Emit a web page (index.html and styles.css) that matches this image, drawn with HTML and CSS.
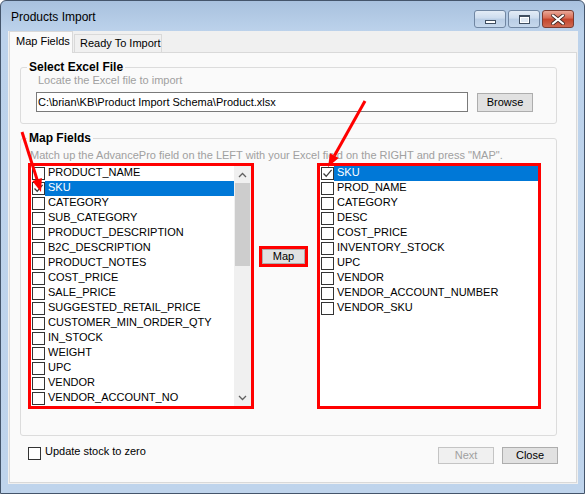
FILE: index.html
```html
<!DOCTYPE html>
<html>
<head>
<meta charset="utf-8">
<title>Products Import</title>
<link rel="stylesheet" href="styles.css">
</head>
<body>
<div class="window">
  <div class="titlebar">
    <span class="title">Products Import</span>
    <div class="caption-buttons">
      <div class="cbtn"><span class="min-glyph"></span></div>
      <div class="cbtn"><span class="max-glyph"></span></div>
      <div class="cbtn cbtn-close">
        <svg width="14" height="11" viewBox="0 0 14 11"><path d="M2 1.5 L12 9.5 M12 1.5 L2 9.5" stroke="#3b2420" stroke-width="3.6" stroke-linecap="round"/><path d="M2 1.5 L12 9.5 M12 1.5 L2 9.5" stroke="#ffffff" stroke-width="2.2" stroke-linecap="round"/></svg>
      </div>
    </div>
  </div>
  <div class="client">
    <div class="tabs">
      <div class="tab tab-active">Map Fields</div>
      <div class="tab tab-inactive">Ready To Import</div>
    </div>
    <div class="tabpage">
      <fieldset class="group group-file">
        <legend>Select Excel File</legend>
        <div class="hint hint-file">Locate the Excel file to import</div>
        <div class="file-row">
          <div class="textbox">C:\brian\KB\Product Import Schema\Product.xlsx</div>
          <div class="button browse">Browse</div>
        </div>
      </fieldset>
      <fieldset class="group group-map">
        <legend>Map Fields</legend>
        <div class="hint hint-map">Match up the AdvancePro field on the LEFT with your Excel field on the RIGHT and press "MAP".</div>
        <div class="map-row">
          <div class="listbox listbox-left">
            <div class="items">
              <div class="row"><span class="cb"></span><span class="label">PRODUCT_NAME</span></div>
              <div class="row row-selected"><span class="cb cb-checked"><svg width="11" height="11" viewBox="0 0 11 11"><path d="M1.5 5.5 L4.2 8.3 L9.6 1.8" fill="none" stroke="#3a3a3a" stroke-width="1.3"/></svg></span><span class="label">SKU</span></div>
              <div class="row"><span class="cb"></span><span class="label">CATEGORY</span></div>
              <div class="row"><span class="cb"></span><span class="label">SUB_CATEGORY</span></div>
              <div class="row"><span class="cb"></span><span class="label">PRODUCT_DESCRIPTION</span></div>
              <div class="row"><span class="cb"></span><span class="label">B2C_DESCRIPTION</span></div>
              <div class="row"><span class="cb"></span><span class="label">PRODUCT_NOTES</span></div>
              <div class="row"><span class="cb"></span><span class="label">COST_PRICE</span></div>
              <div class="row"><span class="cb"></span><span class="label">SALE_PRICE</span></div>
              <div class="row"><span class="cb"></span><span class="label">SUGGESTED_RETAIL_PRICE</span></div>
              <div class="row"><span class="cb"></span><span class="label">CUSTOMER_MIN_ORDER_QTY</span></div>
              <div class="row"><span class="cb"></span><span class="label">IN_STOCK</span></div>
              <div class="row"><span class="cb"></span><span class="label">WEIGHT</span></div>
              <div class="row"><span class="cb"></span><span class="label">UPC</span></div>
              <div class="row"><span class="cb"></span><span class="label">VENDOR</span></div>
              <div class="row"><span class="cb"></span><span class="label">VENDOR_ACCOUNT_NO</span></div>
            </div>
            <div class="scrollbar">
              <div class="sb-btn"><svg width="9" height="6" viewBox="0 0 9 6"><path d="M1 5 L4.5 1.5 L8 5" fill="none" stroke="#606060" stroke-width="1.3"/></svg></div>
              <div class="sb-thumb"></div>
              <div class="sb-track"></div>
              <div class="sb-btn"><svg width="9" height="6" viewBox="0 0 9 6"><path d="M1 1 L4.5 4.5 L8 1" fill="none" stroke="#606060" stroke-width="1.3"/></svg></div>
            </div>
          </div>
          <div class="map-wrap"><div class="button map-button">Map</div></div>
          <div class="listbox listbox-right">
            <div class="items">
              <div class="row row-selected"><span class="cb cb-checked"><svg width="11" height="11" viewBox="0 0 11 11"><path d="M1.5 5.5 L4.2 8.3 L9.6 1.8" fill="none" stroke="#3a3a3a" stroke-width="1.3"/></svg></span><span class="label">SKU</span></div>
              <div class="row"><span class="cb"></span><span class="label">PROD_NAME</span></div>
              <div class="row"><span class="cb"></span><span class="label">CATEGORY</span></div>
              <div class="row"><span class="cb"></span><span class="label">DESC</span></div>
              <div class="row"><span class="cb"></span><span class="label">COST_PRICE</span></div>
              <div class="row"><span class="cb"></span><span class="label">INVENTORY_STOCK</span></div>
              <div class="row"><span class="cb"></span><span class="label">UPC</span></div>
              <div class="row"><span class="cb"></span><span class="label">VENDOR</span></div>
              <div class="row"><span class="cb"></span><span class="label">VENDOR_ACCOUNT_NUMBER</span></div>
              <div class="row"><span class="cb"></span><span class="label">VENDOR_SKU</span></div>
            </div>
          </div>
        </div>
      </fieldset>
      <div class="footer">
        <div class="check"><span class="cb"></span><span class="check-text">Update stock to zero</span></div>
        <div class="footer-buttons">
          <div class="button button-disabled">Next</div>
          <div class="button">Close</div>
        </div>
      </div>
    </div>
  </div>
</div>
<svg class="annotations" width="585" height="494" viewBox="0 0 585 494">
  <line x1="22" y1="132" x2="37.1" y2="179.6" stroke="#ff0000" stroke-width="3"/>
  <polygon points="41,192 41.9,178.1 32.3,181.1" fill="#ff0000"/>
  <line x1="365" y1="101" x2="334.4" y2="155.7" stroke="#ff0000" stroke-width="3"/>
  <polygon points="328,167 338.7,158.1 330,153.2" fill="#ff0000"/>
</svg>
</body>
</html>
```
FILE: styles.css
```css
* { box-sizing: border-box; }

body {
  margin: 0;
  font-family: "Liberation Sans", Arial, sans-serif;
  font-size: 11px;
  color: #000;
  background: #ffffff;
}

.window {
  width: 585px;
  height: 494px;
  border: 1px solid #44556b;
  border-radius: 6px 6px 0 0;
  background: linear-gradient(#a8c1de, #bcd2eb 30px, #bfd4ec);
  display: flex;
  flex-direction: column;
}

.titlebar {
  height: 30px;
  flex: none;
  display: flex;
  align-items: flex-start;
  padding-left: 10px;
}

.title {
  font-size: 12px;
  line-height: 15px;
  margin-top: 9px;
  color: #000;
}

.caption-buttons {
  margin-left: auto;
  margin-top: 9px;
  margin-right: 10px;
  display: flex;
  gap: 2px;
}

.cbtn {
  width: 32px;
  height: 18px;
  border: 1px solid #7086a2;
  border-radius: 3px;
  display: flex;
  align-items: center;
  justify-content: center;
  background: linear-gradient(#e3ecf6, #cddcee 45%, #b9cde5 50%, #c6d8ec);
}

.cbtn-close {
  border-color: #7c3b30;
  background: linear-gradient(#e9a898, #d86a52 45%, #c4442b 50%, #cf6a52);
}

.min-glyph {
  width: 11px;
  height: 4px;
  margin-top: 5px;
  border: 1px solid #3f4e60;
  background: #fff;
}

.max-glyph {
  width: 11px;
  height: 9px;
  border: 1px solid #3f4e60;
  border-top-width: 2px;
  background: #dfe8f2;
  box-shadow: inset 0 0 0 1px #fff;
}

.client {
  flex: 1;
  margin: 0 6px 9px 7px;
  background: #f0f0f0;
  display: flex;
  flex-direction: column;
}

.tabs {
  display: flex;
  align-items: flex-end;
  height: 21px;
  padding-left: 1px;
  position: relative;
  z-index: 1;
}

.tab {
  border: 1px solid #d9d9d9;
  border-bottom: none;
  line-height: 13px;
  white-space: nowrap;
}

.tab-active {
  width: 64px;
  height: 22px;
  margin-bottom: -1px;
  padding: 3px 0 0 6px;
  background: #fafafa;
}

.tab-inactive {
  width: 88px;
  height: 18px;
  margin-left: 1px;
  padding: 2px 0 0 5px;
  background: #f0f0f0;
}

.tabpage {
  flex: 1;
  margin: 0 1px 1px 1px;
  border: 1px solid #d9d9d9;
  background: #fafafa;
  display: flex;
  flex-direction: column;
}

.group {
  margin: 7px 19px 0 10px;
  padding: 0;
  border: 1px solid #dcdcdc;
  border-radius: 3px;
  min-width: 0;
}

.group legend {
  margin-left: 6px;
  padding: 0 2px;
  font-weight: bold;
  font-size: 12px;
  line-height: 14px;
}

.hint {
  color: #a0a0a0;
  line-height: 13px;
  white-space: nowrap;
}

.hint-file { margin-left: 17px; }

.hint-map {
  margin: 4px 0 1px 9px;
}

.file-row {
  display: flex;
  align-items: center;
  margin: 5px 0 11px 15px;
}

.textbox {
  width: 432px;
  height: 20px;
  border: 1px solid #7a7a7a;
  background: #fff;
  padding-left: 1px;
  line-height: 18px;
  white-space: nowrap;
}

.button {
  border: 1px solid #adadad;
  background: #e1e1e1;
  text-align: center;
}

.browse {
  width: 56px;
  height: 19px;
  margin-left: 9px;
  line-height: 17px;
}

.map-row {
  display: flex;
  align-items: flex-start;
  margin: 0 0 26px 7px;
}

.listbox {
  height: 246px;
  border: 3px solid #ff0000;
  background: #fff;
  display: flex;
}

.listbox-left { width: 226px; }

.listbox-right {
  width: 224px;
  margin-left: 9px;
}

.items {
  flex: 1;
  min-width: 0;
}

.row {
  display: flex;
  align-items: flex-start;
  height: 15px;
}

.cb {
  flex: none;
  width: 13px;
  height: 13px;
  border: 1px solid #333;
  background: #fff;
  margin: 1px 0 0 1px;
  display: flex;
  align-items: center;
  justify-content: center;
}

.label {
  flex: 1;
  height: 15px;
  padding-left: 3px;
  line-height: 13px;
  white-space: nowrap;
}

.row-selected .label {
  background: #0078d7;
  color: #fff;
}

.scrollbar {
  width: 17px;
  flex: none;
  background: #f0f0f0;
  display: flex;
  flex-direction: column;
}

.sb-btn {
  height: 17px;
  display: flex;
  align-items: center;
  justify-content: center;
}

.sb-thumb {
  height: 83px;
  margin: 0 1px;
  background: #cdcdcd;
}

.sb-track { flex: 1; }

.map-wrap {
  width: 49px;
  height: 21px;
  margin: 83px 0 0 5px;
  border: 3px solid #ff0000;
  display: flex;
}

.map-button {
  flex: 1;
  line-height: 13px;
}

.footer {
  display: flex;
  align-items: flex-start;
  margin: 11px 18px 0 18px;
}

.check {
  display: flex;
  align-items: flex-start;
}

.check .cb { margin: 0; }

.check-text {
  margin: -2px 0 0 4px;
  line-height: 13px;
}

.footer-buttons {
  margin-left: auto;
  display: flex;
  gap: 8px;
}

.footer-buttons .button {
  width: 56px;
  height: 17px;
  line-height: 15px;
}

.button-disabled {
  color: #a0a0a0;
  border-color: #c4c4c4;
  background: #f0f0f0;
}

.annotations {
  position: absolute;
  left: 0;
  top: 0;
  pointer-events: none;
}
```
